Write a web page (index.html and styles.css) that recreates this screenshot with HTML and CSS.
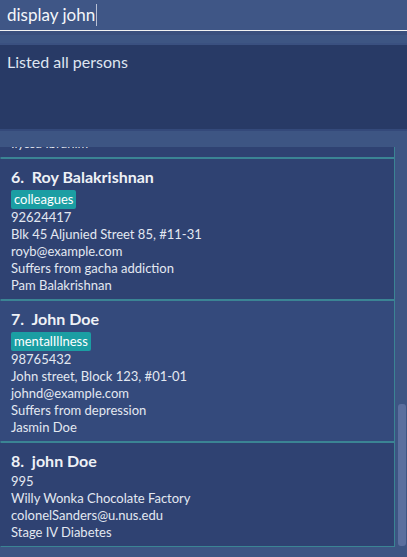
FILE: index.html
```html
<!DOCTYPE html>
<html>
<head>
<meta charset="utf-8">
<link rel="stylesheet" href="styles.css">
</head>
<body>
<div class="app">
  <div class="command">
    <span class="command-text">display john</span><span class="caret"></span>
  </div>
  <div class="gap-top"></div>
  <div class="result">Listed all persons</div>
  <div class="gap-mid"></div>
  <div class="list-panel">
    <div class="list-viewport">
      <div class="card card-odd card-partial">
        <div class="line">Ilyssa Ibrahim</div>
      </div>
      <div class="card card-odd">
        <div class="name">6.&nbsp; Roy Balakrishnan</div>
        <div class="tags"><span class="tag">colleagues</span></div>
        <div class="line">92624417</div>
        <div class="line">Blk 45 Aljunied Street 85, #11-31</div>
        <div class="line">royb@example.com</div>
        <div class="line">Suffers from gacha addiction</div>
        <div class="line">Pam Balakrishnan</div>
      </div>
      <div class="card card-even">
        <div class="name">7.&nbsp; John Doe</div>
        <div class="tags"><span class="tag">mentalIllness</span></div>
        <div class="line">98765432</div>
        <div class="line">John street, Block 123, #01-01</div>
        <div class="line">johnd@example.com</div>
        <div class="line">Suffers from depression</div>
        <div class="line">Jasmin Doe</div>
      </div>
      <div class="card card-odd">
        <div class="name">8.&nbsp; john Doe</div>
        <div class="line">995</div>
        <div class="line">Willy Wonka Chocolate Factory</div>
        <div class="line">colonelSanders@u.nus.edu</div>
        <div class="line">Stage IV Diabetes</div>
      </div>
    </div>
    <div class="scrollbar"><div class="thumb"></div></div>
  </div>
</div>
</body>
</html>
```
FILE: styles.css
```css
html, body {
  margin: 0;
  padding: 0;
}
body {
  background: #3d5583;
  font-family: "Segoe UI", Lato, "Open Sans", sans-serif;
  color: #e6eaf2;
  width: 407px;
  height: 557px;
  overflow: hidden;
}
.app {
  display: flex;
  flex-direction: column;
}
.command {
  height: 30px;
  background: #3f5686;
  border-bottom: 1px solid #f2f2f2;
  display: flex;
  align-items: center;
  padding-left: 7px;
  box-sizing: content-box;
}
.command-text {
  font-size: 17px;
  color: #f4f6fa;
  line-height: 22px;
}
.caret {
  width: 1px;
  height: 22px;
  background: #b8c0d4;
  margin-left: 1px;
}
.gap-top {
  height: 14px;
  background: #3d5583;
  border-top: 4px solid #3a4f7d;
  box-sizing: border-box;
  border-bottom: 2px solid #3a5080;
}
.result {
  height: 84px;
  background: #283a66;
  font-size: 16px;
  padding: 6px 7px 0;
  line-height: 22px;
  box-sizing: border-box;
  color: #dfe5f0;
}
.gap-mid {
  height: 18px;
  background: #3d5583;
  border-top: 2px solid #34497a;
  box-sizing: border-box;
}
.list-panel {
  display: flex;
  height: 401px;
}
.list-viewport {
  width: 395px;
  overflow: hidden;
  display: flex;
  flex-direction: column;
}
.card {
  border: 1px solid #3b8494;
  border-left-color: #2f4272;
  padding: 6px 10px 5px;
  flex: none;
}
.card-odd {
  background: #2f4272;
}
.card-even {
  background: #344a7c;
  border-left-color: #344a7c;
}
.card-partial {
  margin-top: -12px;
  border-top: none;
  padding-top: 0;
}
.name {
  font-size: 16px;
  font-weight: bold;
  line-height: 24px;
  color: #eef1f6;
}
.tags {
  display: flex;
  margin-top: 1px;
}
.tag {
  background: #1b9ea3;
  color: #ffffff;
  font-size: 13px;
  line-height: 19px;
  padding: 0 3px;
  border-radius: 2px;
}
.line {
  font-size: 13px;
  line-height: 17px;
  color: #e3e8f1;
}
.scrollbar {
  flex: 1;
  display: flex;
  flex-direction: column;
  padding: 0 1px 0 3px;
}
.thumb {
  margin-top: 257px;
  height: 142px;
  background: #5b6f9e;
  border-radius: 3px;
}
```
